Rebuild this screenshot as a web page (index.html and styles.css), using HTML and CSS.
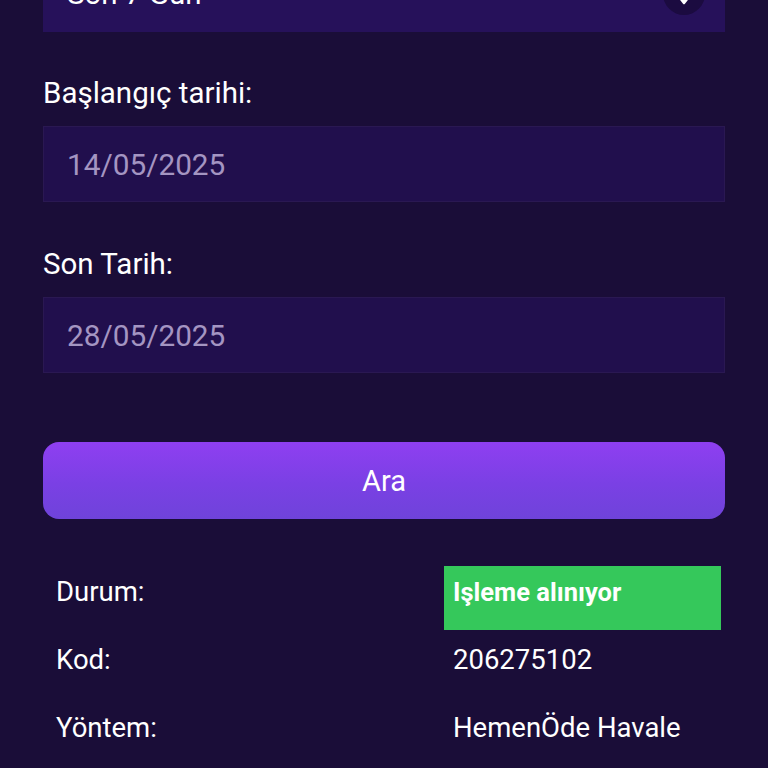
FILE: index.html
```html
<!DOCTYPE html>
<html lang="tr">
<head>
<meta charset="utf-8">
<title>Filtre</title>
<link rel="stylesheet" href="styles.css">
</head>
<body>
<main class="page">
  <div class="select">
    <span class="select-text">Son 7 Gün</span>
    <span class="select-btn">
      <svg class="chev" width="20" height="14" viewBox="0 0 20 14"><path d="M3 3 L10 12 L17 3 Z" fill="#ffffff" stroke="#ffffff" stroke-width="2.5" stroke-linejoin="round"/></svg>
    </span>
  </div>

  <section class="field">
    <label class="label">Başlangıç tarihi:</label>
    <div class="input">14/05/2025</div>
  </section>

  <section class="field">
    <label class="label">Son Tarih:</label>
    <div class="input">28/05/2025</div>
  </section>

  <button class="btn">Ara</button>

  <div class="details">
    <div class="cell key">Durum:</div>
    <div class="cell val status">Işleme alınıyor</div>
    <div class="cell key">Kod:</div>
    <div class="cell val">206275102</div>
    <div class="cell key">Yöntem:</div>
    <div class="cell val">HemenÖde Havale</div>
  </div>
</main>
</body>
</html>
```

FILE: styles.css
```css
html, body {
  margin: 0;
  padding: 0;
  background: #1a0d38;
  overflow: hidden;
}
body {
  font-family: Roboto, "Liberation Sans", sans-serif;
  color: #ffffff;
}
.page {
  padding: 0 43px;
  display: flex;
  flex-direction: column;
}
.select {
  margin-top: -44px;
  height: 76px;
  box-sizing: border-box;
  background: #26115a;
  display: flex;
  align-items: center;
  justify-content: space-between;
  padding: 0 20px 0 24px;
}
.select-text {
  font-size: 29.5px;
  line-height: 34px;
  color: #ffffff;
}
.select-btn {
  width: 42px;
  height: 42px;
  border-radius: 50%;
  background: #1b0b40;
  display: flex;
  align-items: center;
  justify-content: center;
}
.chev {
  margin-top: 8px;
}
.field {
  display: flex;
  flex-direction: column;
  gap: 16px;
  margin-top: 44px;
}
.label {
  font-size: 29.5px;
  line-height: 34px;
  color: #ffffff;
}
.field + .field {
  margin-top: 45px;
}
.input {
  height: 76px;
  box-sizing: border-box;
  background: #210f4d;
  border: 1px solid #2a1852;
  display: flex;
  align-items: center;
  padding-left: 23px;
  font-size: 29.75px;
  color: #a495c2;
}
.btn {
  margin-top: 69px;
  height: 77px;
  border: none;
  border-radius: 16px;
  background: linear-gradient(180deg, #8f3ff1 0%, #7a40e4 55%, #6f43da 100%);
  color: #ffffff;
  font-family: Roboto, "Liberation Sans", sans-serif;
  font-size: 29px;
  padding: 0;
}
.details {
  margin-top: 47px;
  display: grid;
  grid-template-columns: 393px 277px;
  column-gap: 4px;
  row-gap: 4px;
  padding: 0 4px;
}
.cell {
  height: 64px;
  box-sizing: border-box;
  padding: 9px 9px 0 9px;
  font-size: 27.5px;
  line-height: 34px;
}
.status {
  background: #35c85b;
  font-weight: 700;
  font-size: 25.5px;
}
```
